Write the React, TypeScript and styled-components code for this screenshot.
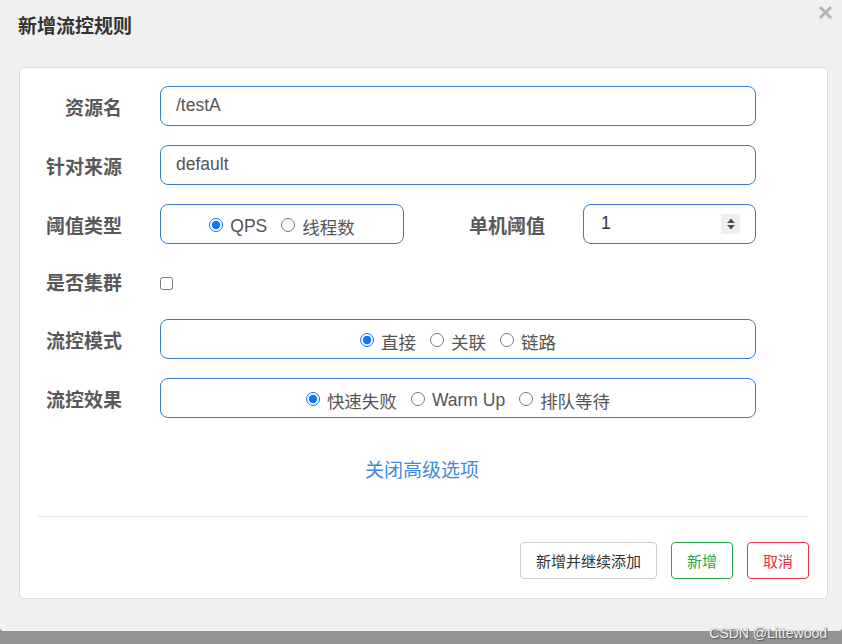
import React from 'react'
import styled, { createGlobalStyle } from 'styled-components'

const GlobalStyle = createGlobalStyle`
  html, body {
    margin: 0;
    padding: 0;
    background: #939393;
  }
  body {
    font-family: "Liberation Sans", "Noto Sans CJK SC", sans-serif;
  }
`

const App = () => {
  return (
    <Page>
      <GlobalStyle />
      <Dialog>
        <Header>
          <Title>新增流控规则</Title>
          <Close aria-label="close">
            <svg width="15" height="15" viewBox="0 0 15 15">
              <path d="M2 2L13 13M13 2L2 13" stroke="#b4b4b4" strokeWidth="3" strokeLinecap="butt" />
            </svg>
          </Close>
        </Header>
        <Card>
          <Form>
            <Row>
              <Label>资源名</Label>
              <TextBox>/testA</TextBox>
            </Row>
            <Row>
              <Label>针对来源</Label>
              <TextBox>default</TextBox>
            </Row>
            <Row>
              <Label>阈值类型</Label>
              <RadioBox width={244}>
                <Option><Radio type="radio" name="grade" defaultChecked />QPS</Option>
                <Option><Radio type="radio" name="grade" />线程数</Option>
              </RadioBox>
              <Label width={141}>单机阈值</Label>
              <NumberBox>
                <span>1</span>
                <Spinner>
                  <svg width="10" height="14" viewBox="0 0 10 14">
                    <path d="M1 6L5 1.5L9 6Z" fill="#555" />
                    <path d="M1 8L5 12.5L9 8Z" fill="#555" />
                  </svg>
                </Spinner>
              </NumberBox>
            </Row>
            <Row short>
              <Label>是否集群</Label>
              <Check type="checkbox" />
            </Row>
            <Row>
              <Label>流控模式</Label>
              <RadioBox>
                <Option><Radio type="radio" name="mode" defaultChecked />直接</Option>
                <Option><Radio type="radio" name="mode" />关联</Option>
                <Option><Radio type="radio" name="mode" />链路</Option>
              </RadioBox>
            </Row>
            <Row>
              <Label>流控效果</Label>
              <RadioBox>
                <Option><Radio type="radio" name="effect" defaultChecked />快速失败</Option>
                <Option><Radio type="radio" name="effect" />Warm Up</Option>
                <Option><Radio type="radio" name="effect" />排队等待</Option>
              </RadioBox>
            </Row>
          </Form>
          <LinkRow>
            <TextLink>关闭高级选项</TextLink>
          </LinkRow>
          <Divider />
          <Footer>
            <Button>新增并继续添加</Button>
            <Button tone="#28a745">新增</Button>
            <Button tone="#dc3545">取消</Button>
          </Footer>
        </Card>
      </Dialog>
      <Band />
      <Watermark>CSDN @Littewood</Watermark>
    </Page>
  )
}

export default App

const Page = styled.div`
  position: relative;
  height: 644px;
  display: flex;
  flex-direction: column;
  overflow: hidden;
`

const Dialog = styled.div`
  position: relative;
  height: 631px;
  flex-shrink: 0;
  background: #f0f0f0;
  border-bottom-left-radius: 4px;
  border-bottom-right-radius: 4px;
  box-sizing: border-box;
`

const Band = styled.div`
  flex: 1;
  background: #939393;
`

const Header = styled.div`
  height: 67px;
  box-sizing: border-box;
  padding: 12px 18px 0 18px;
  display: flex;
  justify-content: space-between;
  align-items: flex-start;
`

const Title = styled.h4`
  margin: 0;
  font-size: 19px;
  line-height: 26px;
  font-weight: 700;
  color: #333;
  font-family: "Noto Sans CJK SC", sans-serif;
`

const Close = styled.div`
  position: absolute;
  top: 5px;
  right: 9px;
  width: 15px;
  height: 15px;
`

const Card = styled.div`
  margin: 0 14px 0 19px;
  background: #fff;
  border: 1px solid #dcdcdc;
  border-radius: 5px;
  padding: 18px 19px 19px 18px;
`

const Form = styled.div`
  display: flex;
  flex-direction: column;
  gap: 19px;
  padding-right: 52px;
`

const Row = styled.div<{ short?: boolean }>`
  display: flex;
  align-items: center;
  height: ${p => (p.short ? '37px' : '40px')};
`

const Label = styled.label<{ width?: number }>`
  width: ${p => p.width ?? 84}px;
  flex-shrink: 0;
  margin-right: 38px;
  text-align: right;
  font-size: 19px;
  font-weight: 700;
  color: #595959;
  font-family: "Noto Sans CJK SC", sans-serif;
  white-space: nowrap;
`

const TextBox = styled.div`
  flex: 1;
  height: 40px;
  box-sizing: border-box;
  border: 1px solid #3a7cc3;
  border-radius: 8px;
  padding: 0 15px 2px 15px;
  display: flex;
  align-items: center;
  font-size: 17.5px;
  color: #555;
`

const RadioBox = styled.div<{ width?: number }>`
  ${p => (p.width ? `width: ${p.width}px; flex-shrink: 0;` : 'flex: 1;')}
  height: 40px;
  box-sizing: border-box;
  border: 1px solid #3a7cc3;
  border-radius: 8px;
  display: flex;
  align-items: center;
  justify-content: center;
  gap: 14px;
  padding-top: 4px;
`

const Option = styled.label`
  display: inline-flex;
  align-items: center;
  gap: 7px;
  font-size: 17.5px;
  color: #555;
  font-family: "Liberation Sans", "Noto Sans CJK SC", sans-serif;
`

const Radio = styled.input`
  margin: 0;
  width: 14px;
  height: 14px;
  accent-color: #0a75ff;
  position: relative;
  top: -1px;
`

const NumberBox = styled.div`
  flex: 1;
  height: 40px;
  box-sizing: border-box;
  border: 1px solid #3a7cc3;
  border-radius: 8px;
  padding: 0 15px 2px 17px;
  display: flex;
  align-items: center;
  justify-content: space-between;
  font-size: 17.5px;
  color: #333;
`

const Spinner = styled.div`
  width: 19px;
  height: 20px;
  margin-top: 2px;
  background: #efefef;
  display: flex;
  align-items: center;
  justify-content: center;
`

const Check = styled.input`
  margin: 4px 0 0 0;
  width: 13px;
  height: 13px;
`

const LinkRow = styled.div`
  margin-top: 39px;
  height: 24px;
  display: flex;
  justify-content: center;
  padding-right: 2px;
`

const TextLink = styled.a`
  font-size: 19px;
  line-height: 24px;
  color: #3d8be0;
  cursor: pointer;
  font-family: "Noto Sans CJK SC", sans-serif;
`

const Divider = styled.hr`
  margin: 35px 0 0 0;
  border: none;
  border-top: 1px solid #e5e5e5;
`

const Footer = styled.div`
  margin-top: 25px;
  margin-right: -1px;
  display: flex;
  justify-content: flex-end;
  gap: 14px;
`

const Button = styled.button<{ tone?: string }>`
  height: 37px;
  padding: 0 15px;
  background: #fff;
  border: 1px solid ${p => p.tone ?? '#cccccc'};
  color: ${p => p.tone ?? '#333'};
  border-radius: 4px;
  font-size: 15px;
  font-family: "Noto Sans CJK SC", sans-serif;
`

const Watermark = styled.div`
  position: absolute;
  right: 15px;
  bottom: 3px;
  font-size: 14px;
  line-height: 16px;
  color: #f4f4f4;
  text-shadow: 1px 1px 1px #555, 0 0 1px #777;
  font-family: "Liberation Sans", sans-serif;
`
